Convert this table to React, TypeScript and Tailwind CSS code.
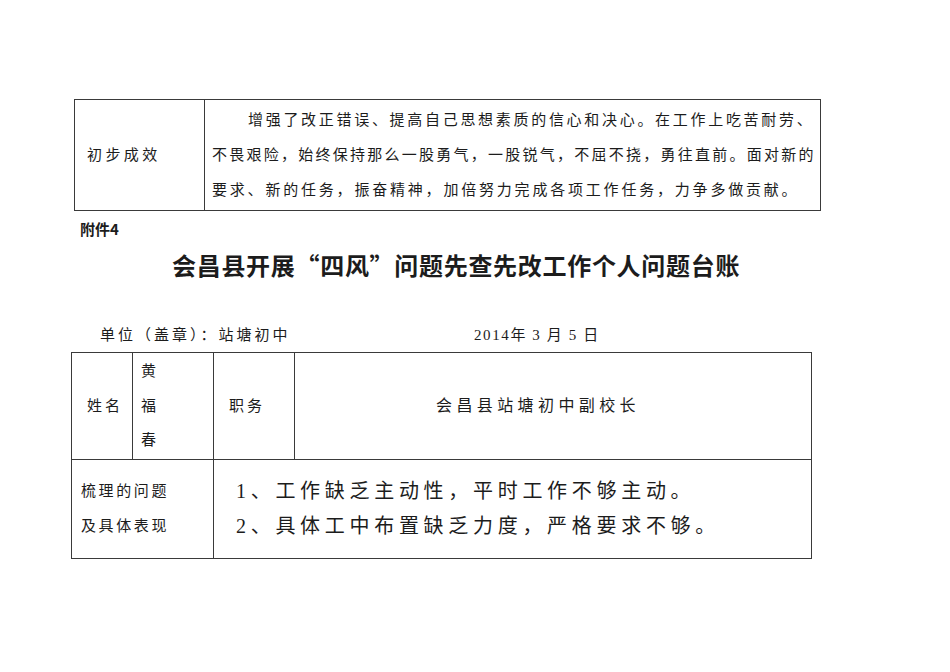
const line = 'border-[#3a3a3a]';

export default function App() {
  return (
    <div className="min-h-[672px] w-[950px] bg-white pt-[99px] text-[#1c1c1c] font-['Liberation_Serif','Noto_Sans_CJK_SC',serif]">
      {/* 上一页表格的结尾 */}
      <div className={`ml-[74px] grid h-[112px] w-[747px] grid-cols-[130px_1fr] border ${line}`}>
        <div className={`flex items-center border-r ${line} pl-[12px] text-[15px] tracking-[3.4px]`}>初步成效</div>
        <div className="pl-[7px] pt-[3px] text-[15px] leading-[35px]">
          <p className="whitespace-nowrap pl-[36px] tracking-[2.7px]">增强了改正错误、提高自己思想素质的信心和决心。在工作上吃苦耐劳、</p>
          <p className="whitespace-nowrap tracking-[2.25px]">不畏艰险，始终保持那么一股勇气，一股锐气，不屈不挠，勇往直前。面对新的</p>
          <p className="whitespace-nowrap tracking-[2.8px]">要求、新的任务，振奋精神，加倍努力完成各项工作任务，力争多做贡献。</p>
        </div>
      </div>

      <div className="ml-[80px] mt-[9px] text-[15px] font-bold leading-[18px] font-['Noto_Sans_CJK_SC',sans-serif]">附件4</div>

      <h1 className="ml-[172px] mt-[11px] whitespace-nowrap text-[24px] font-bold leading-[32px] tracking-[0.7px] font-['Noto_Sans_CJK_SC',serif]">
        会昌县开展“四风”问题先查先改工作个人问题台账
      </h1>

      <div className="mt-[43px] flex text-[15px] leading-[22px]">
        <div className="ml-[100px] w-[374px] whitespace-nowrap tracking-[3px]">单位（盖章）：站塘初中</div>
        <div className="whitespace-pre tracking-[1.6px]">2014年 3 月 5 日</div>
      </div>

      {/* 个人问题台账 */}
      <div className={`ml-[71px] mt-[6px] w-[741px] border ${line}`}>
        <div className={`grid h-[107px] grid-cols-[61px_81px_81px_1fr] border-b ${line}`}>
          <div className={`flex items-center border-r ${line} pl-[15px] text-[15px] tracking-[3px]`}>姓名</div>
          <div className={`flex flex-col justify-center border-r ${line} pl-[8px] text-[15px] leading-[34.5px]`}>
            <span>黄</span>
            <span>福</span>
            <span>春</span>
          </div>
          <div className={`flex items-center border-r ${line} pl-[15px] text-[15px] tracking-[3px]`}>职务</div>
          <div className="flex items-center pl-[141px] text-[16px] tracking-[4.4px]">会昌县站塘初中副校长</div>
        </div>
        <div className="grid h-[98px] grid-cols-[142px_1fr]">
          <div className={`flex flex-col justify-center border-r ${line} pl-[9px] text-[15px] leading-[35px] tracking-[2.6px]`}>
            <span>梳理的问题</span>
            <span>及具体表现</span>
          </div>
          <div className="flex flex-col justify-center pl-[22px] text-[20px] leading-[35px] tracking-[4.7px]">
            <span className="whitespace-nowrap">1、工作缺乏主动性，平时工作不够主动。</span>
            <span className="whitespace-nowrap">2、具体工中布置缺乏力度，严格要求不够。</span>
          </div>
        </div>
      </div>
    </div>
  );
}
